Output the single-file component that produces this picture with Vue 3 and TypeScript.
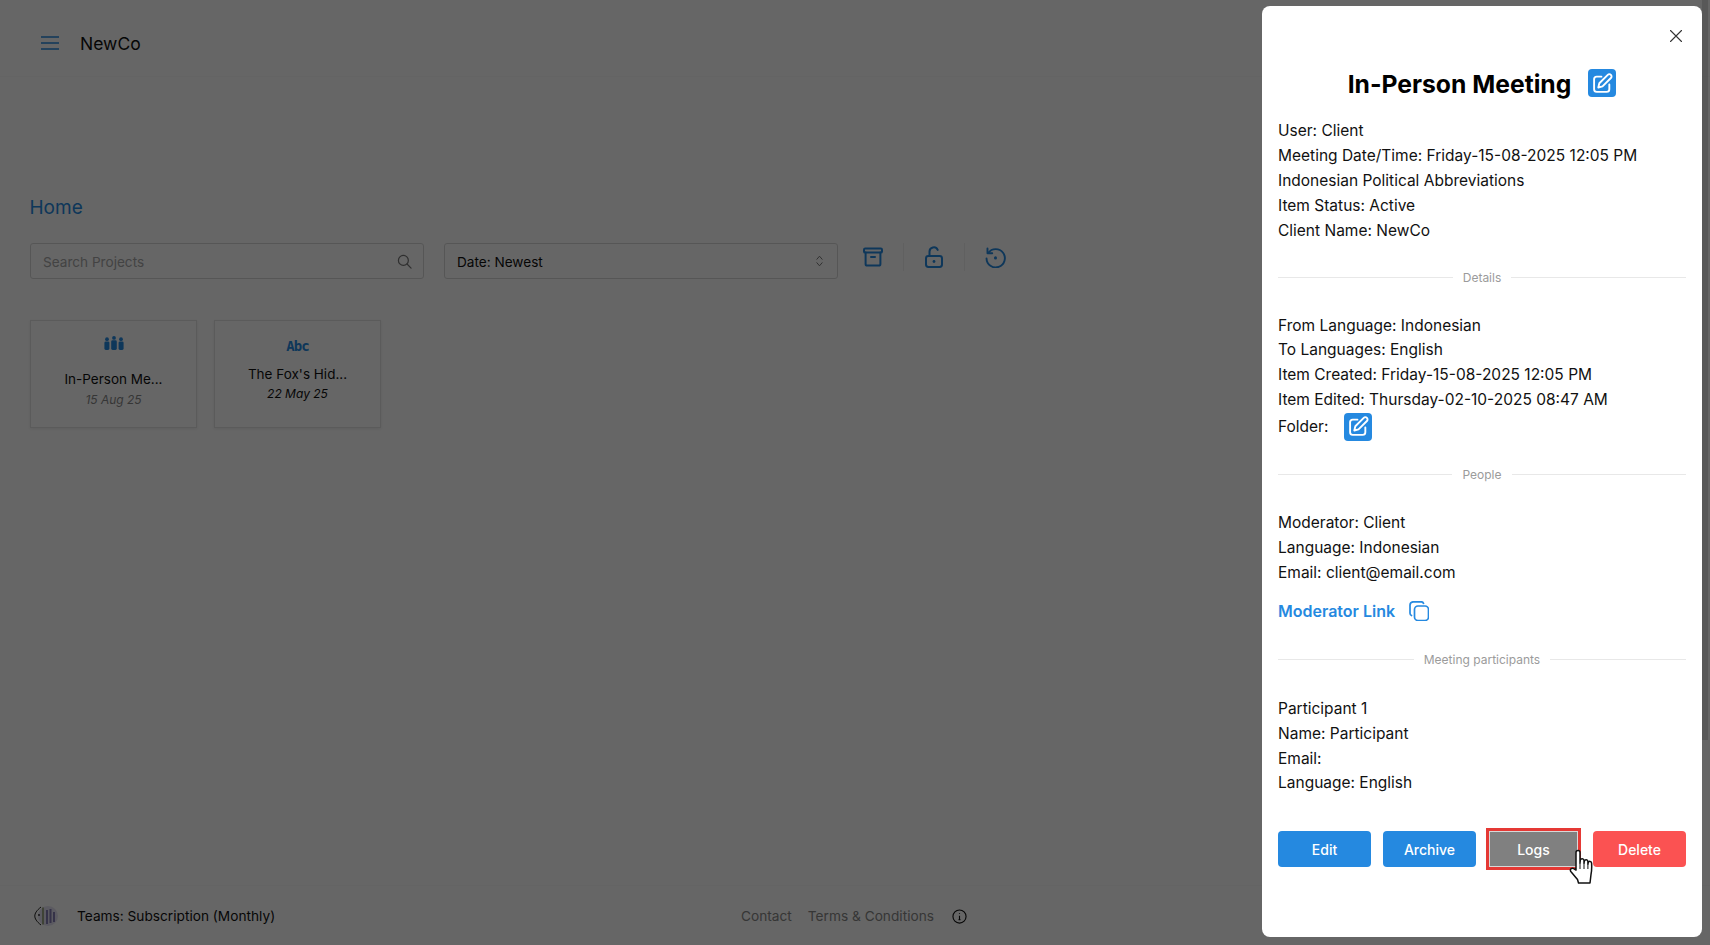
<script setup lang="ts">
interface Project {
  title: string
  date: string
  kind: 'meeting' | 'text'
}

const projects: Project[] = [
  { title: 'In-Person Me...', date: '15 Aug 25', kind: 'meeting' },
  { title: "The Fox's Hid...", date: '22 May 25', kind: 'text' },
]

const summary = [
  'User: Client',
  'Meeting Date/Time: Friday-15-08-2025 12:05 PM',
  'Indonesian Political Abbreviations',
  'Item Status: Active',
  'Client Name: NewCo',
]
const details = [
  'From Language: Indonesian',
  'To Languages: English',
  'Item Created: Friday-15-08-2025 12:05 PM',
  'Item Edited: Thursday-02-10-2025 08:47 AM',
]
const people = ['Moderator: Client', 'Language: Indonesian', 'Email: client@email.com']
const participants = ['Participant 1', 'Name: Participant', 'Email:', 'Language: English']
</script>

<template>
  <div class="page">
    <header class="topbar">
      <svg class="menu" viewBox="0 0 18 14" width="18" height="14" fill="none" stroke="#2589e0" stroke-width="1.6">
        <path d="M0 1h18M0 7h18M0 13h18" />
      </svg>
      <span class="brand">NewCo</span>
    </header>

    <main class="content">
      <h1 class="home">Home</h1>
      <div class="toolbar">
        <div class="field search">
          <span class="placeholder">Search Projects</span>
          <svg viewBox="0 0 16 16" width="15" height="15" fill="none" stroke="#777" stroke-width="1.3">
            <circle cx="6.8" cy="6.8" r="5.3" />
            <path d="M10.7 10.7L15 15" stroke-linecap="round" />
          </svg>
        </div>
        <div class="field select">
          <span class="value">Date: Newest</span>
          <svg viewBox="0 0 10 16" width="9" height="14" fill="none" stroke="#777" stroke-width="1.1">
            <path d="M2 6l3-3.5L8 6M2 10l3 3.5L8 10" stroke-linecap="round" stroke-linejoin="round" />
          </svg>
        </div>
        <div class="tools">
          <svg class="tool" viewBox="0 0 20 20" width="20" height="20" fill="none" stroke="#2589e0" stroke-width="2" stroke-linejoin="round">
            <rect x="1" y="1.6" width="18" height="4" rx="1.2" />
            <path d="M2.6 5.6V17a1.6 1.6 0 0 0 1.6 1.600h11.600a1.600 1.600 0 0 0 1.600-1.600V5.600M8 10h4" stroke-linecap="round" />
          </svg>
          <i class="sep"></i>
          <svg class="tool" viewBox="0 0 20 22" width="20" height="22" fill="none" stroke="#2589e0" stroke-width="2">
            <rect x="2" y="10" width="16" height="11" rx="2.400" />
            <path d="M5.500 10V5.800a4.300 4.300 0 0 1 8.200-1.900" stroke-linecap="round" />
            <circle cx="10" cy="15.500" r="1.400" fill="#2589e0" stroke="none" />
          </svg>
          <i class="sep"></i>
          <svg class="tool" viewBox="0 0 22 22" width="21" height="21" fill="none" stroke="#2589e0" stroke-width="2" stroke-linecap="round" stroke-linejoin="round">
            <path d="M3.400 6.200A9.600 9.600 0 1 1 1.600 12" />
            <path d="M2.600 1.600v5h5" />
            <circle cx="11" cy="11.400" r="1.600" fill="#2589e0" stroke="none" />
          </svg>
        </div>
      </div>

      <div class="cards">
        <article v-for="p in projects" :key="p.title" class="card" :class="p.kind">
          <svg v-if="p.kind === 'meeting'" class="people-icon" viewBox="0 0 20 14" width="20" height="14" fill="#2589e0">
            <circle cx="3" cy="3.200" r="1.900" />
            <rect x="0.400" y="5.400" width="5" height="8.600" rx="1.400" />
            <circle cx="10" cy="1.900" r="1.900" />
            <rect x="7.200" y="4.300" width="5.600" height="9.700" rx="1.400" />
            <circle cx="17" cy="3.200" r="1.900" />
            <rect x="14.600" y="5.400" width="5" height="8.600" rx="1.400" />
          </svg>
          <span v-else class="abc">Abc</span>
          <div class="card-title">{{ p.title }}</div>
          <div class="card-date">{{ p.date }}</div>
        </article>
      </div>
    </main>

    <footer class="footer">
      <div class="foot-left">
        <svg viewBox="0 0 25 22" width="25" height="22" fill="none">
          <ellipse cx="14" cy="11" rx="10" ry="10" fill="#d8d4ec" opacity=".7" />
          <path d="M7 2C2.500 5.500 .800 8.500.800 11s1.700 5.500 6.200 9" stroke="#222" stroke-width="1" />
          <path d="M9 2.500v17" stroke="#7f8f5a" stroke-width="1.400" />
          <path d="M13 5v14M16.500 4v14M20 7v10" stroke="#5d5299" stroke-width="2" opacity=".7" />
          <circle cx="5" cy="10" r=".9" fill="#222" />
        </svg>
        <span>Teams: Subscription (Monthly)</span>
      </div>
      <nav class="foot-links">
        <span>Contact</span>
        <span>Terms &amp; Conditions</span>
        <svg class="info" viewBox="0 0 16 16" width="15" height="15" fill="none" stroke="#111" stroke-width="1.200">
          <circle cx="8" cy="8" r="7" />
          <path d="M8 7.300v4M7 11.300h2M8 4.600v.6" />
        </svg>
      </nav>
    </footer>

    <div class="overlay"></div>
    <div class="scroll-thumb"></div>

    <aside class="drawer">
      <svg class="close" viewBox="0 0 12 12" width="12" height="12" fill="none" stroke="#333" stroke-width="1.100">
        <path d="M.5.500l11 11M11.500.500l-11 11" stroke-linecap="round" />
      </svg>

      <div class="title-row">
        <h2>In-Person Meeting</h2>
        <button class="edit-btn" type="button" aria-label="Edit title">
          <svg viewBox="0 0 20 20" width="21" height="21" fill="none" stroke="#fff" stroke-width="1.800" stroke-linecap="round" stroke-linejoin="round">
            <path d="M9 3.500H4.500a2.500 2.500 0 0 0-2.500 2.500v9.500a2.500 2.500 0 0 0 2.500 2.500H14a2.500 2.500 0 0 0 2.500-2.500V11" />
            <path d="M15 1.800a2.100 2.100 0 0 1 3 3l-8 8-4 1 1-4z" />
          </svg>
        </button>
      </div>

      <div class="block first">
        <div v-for="l in summary" :key="l" class="line">{{ l }}</div>
      </div>

      <div class="divider"><span>Details</span></div>

      <div class="block">
        <div v-for="l in details" :key="l" class="line">{{ l }}</div>
        <div class="folder">
          <span>Folder:</span>
          <button class="edit-btn" type="button" aria-label="Edit folder">
            <svg viewBox="0 0 20 20" width="21" height="21" fill="none" stroke="#fff" stroke-width="1.800" stroke-linecap="round" stroke-linejoin="round">
              <path d="M9 3.500H4.500a2.500 2.500 0 0 0-2.500 2.500v9.500a2.500 2.500 0 0 0 2.500 2.500H14a2.500 2.500 0 0 0 2.500-2.500V11" />
              <path d="M15 1.800a2.100 2.100 0 0 1 3 3l-8 8-4 1 1-4z" />
            </svg>
          </button>
        </div>
      </div>

      <div class="divider"><span>People</span></div>

      <div class="block">
        <div v-for="l in people" :key="l" class="line">{{ l }}</div>
        <div class="mod-link">
          <span>Moderator Link</span>
          <svg viewBox="0 0 20 20" width="20" height="20" fill="none" stroke="#2589e0" stroke-width="1.700" stroke-linejoin="round">
            <rect x="5.500" y="5" width="14" height="14.500" rx="3.500" />
            <path d="M2.500 14.500A2.500 2.500 0 0 1 1 12.200V4a3.500 3.500 0 0 1 3.500-3.200h7.800a2.500 2.500 0 0 1 2.200 1.500" stroke-linecap="round" />
          </svg>
        </div>
      </div>

      <div class="divider third"><span>Meeting participants</span></div>

      <div class="block">
        <div v-for="l in participants" :key="l" class="line">{{ l }}</div>
      </div>

      <div class="actions">
        <button class="btn blue" type="button">Edit</button>
        <button class="btn blue" type="button">Archive</button>
        <button class="btn gray" type="button">Logs</button>
        <button class="btn red" type="button">Delete</button>
      </div>

      <svg class="hand" viewBox="0 0 26 36" width="26" height="36" stroke="#111" stroke-width="1.500" fill="#fff" stroke-linejoin="round">
        <path d="M7 21V3.500a2 2 0 0 1 4 0V14l.3-3a1.900 1.900 0 0 1 3.700.300V14l.4-2a1.800 1.800 0 0 1 3.500.400V15l.4-1.500a1.700 1.700 0 0 1 3.300.500c.2 4 .2 8-.6 11.500L21 34H9.500l-1-3.500L1.800 22.500c-1.300-2 1-4.200 2.900-2.900z" />
        <path d="M11 14v6M15 14v6M18.900 15v5" fill="none" stroke-width="1" />
      </svg>
    </aside>
  </div>
</template>

<style>
html,
body {
  margin: 0;
  overflow: hidden;
  background: #fff;
}
</style>

<style scoped>
.page {
  height: 945px;
  display: flex;
  flex-direction: column;
  font-family: Inter, "Liberation Sans", sans-serif;
  color: #111;
  background: #fff;
}

.topbar {
  height: 77px;
  flex: none;
  display: flex;
  align-items: center;
  gap: 21px;
  padding-left: 41px;
  border-bottom: 1px solid #fbfbfb;
  box-sizing: border-box;
}

.menu {
  margin-top: 9px;
}

.brand {
  font-size: 17.5px;
  margin-top: 11px;
}

.content {
  flex: 1;
  padding: 0 30px;
}

.home {
  margin: 117px 0 0 -0.5px;
  font-size: 19px;
  font-weight: 400;
  line-height: 28px;
  color: #2589e0;
}

.toolbar {
  display: flex;
  align-items: flex-start;
  margin-top: 21px;
}

.field {
  height: 36px;
  box-sizing: border-box;
  border: 1px solid #d8d8d8;
  border-radius: 3px;
  display: flex;
  align-items: center;
  justify-content: space-between;
  font-size: 13.6px;
}

.search {
  width: 394px;
  padding: 0 11px 0 12px;
}

.placeholder {
  color: #a8a8a8;
  margin-top: 1px;
}

.value {
  margin-top: 1px;
}

.select {
  width: 394px;
  margin-left: 20px;
  padding: 0 13px 0 12px;
}

.tools {
  display: flex;
  align-items: center;
  height: 28px;
  margin-left: 25px;
}

.tool {
  flex: none;
}

.sep {
  width: 1px;
  height: 28px;
  background: #f0f0f0;
  margin: 0 20px;
}

.cards {
  display: flex;
  gap: 17px;
  margin-top: 41px;
}

.card {
  width: 167px;
  height: 108px;
  box-sizing: border-box;
  border: 1px solid #e4e4e4;
  box-shadow: 0 1px 3px rgba(0, 0, 0, 0.08);
  display: flex;
  flex-direction: column;
  align-items: center;
  text-align: center;
}

.people-icon {
  margin-top: 15px;
}

.abc {
  margin-top: 17px;
  font-family: "DejaVu Sans Mono", monospace;
  font-size: 14px;
  letter-spacing: -0.9px;
  line-height: 17px;
  font-weight: 700;
  color: #2589e0;
}

.card-title {
  font-size: 13.5px;
  line-height: 20px;
  margin-top: 9px;
}

.meeting .card-title {
  margin-top: 19px;
}

.card-date {
  font-size: 12px;
  font-style: italic;
  line-height: 16px;
  margin-top: 2px;
}

.meeting .card-date {
  color: #888;
  margin-top: 3px;
}

.footer {
  flex: none;
  height: 60px;
  box-sizing: border-box;
  border-top: 1px solid #fbfbfb;
  display: flex;
  align-items: center;
  padding: 1px 0 0 34px;
  font-size: 13.7px;
}

.foot-left {
  display: flex;
  align-items: center;
  gap: 18px;
  width: 707px;
}

.foot-links {
  display: flex;
  align-items: center;
  gap: 16px;
  color: #888;
}

.info {
  margin-left: 2px;
}

.overlay {
  position: fixed;
  inset: 0;
  background: rgba(0, 0, 0, 0.6);
}

.scroll-thumb {
  position: fixed;
  top: 0;
  right: 2px;
  width: 6px;
  height: 740px;
  background: rgba(0, 0, 0, 0.14);
}

.drawer {
  position: fixed;
  top: 6px;
  right: 8px;
  bottom: 8px;
  width: 440px;
  box-sizing: border-box;
  padding: 63px 16px 0;
  background: #fff;
  border-radius: 8px;
  font-size: 15.5px;
  color: #111;
}

.close {
  position: absolute;
  top: 24px;
  right: 20px;
}

.title-row {
  display: flex;
  justify-content: center;
  align-items: center;
  gap: 17px;
  height: 28px;
}

.title-row h2 {
  margin: 1px 0 0;
  font-size: 24.7px;
  font-weight: 700;
  color: #000;
}

.edit-btn {
  width: 28px;
  height: 28px;
  padding: 0;
  border: 0;
  border-radius: 4px;
  background: #2589e0;
  display: flex;
  align-items: center;
  justify-content: center;
}

.block.first {
  margin-top: 21px;
}

.line {
  line-height: 24.85px;
  height: 24.85px;
  white-space: nowrap;
}

.first .line {
  line-height: 25px;
  height: 25px;
}

.divider {
  display: flex;
  align-items: center;
  gap: 10px;
  height: 16px;
  margin: 26px 0 28.5px;
  font-size: 12px;
  color: #9b9b9b;
}

.divider::before,
.divider::after {
  content: "";
  flex: 1;
  height: 1px;
  background: #e8e8e8;
}

.divider.third {
  margin: 31px 0 29px;
}

.folder {
  display: flex;
  align-items: center;
  gap: 16px;
  height: 28px;
}

.mod-link {
  display: flex;
  align-items: center;
  gap: 14px;
  height: 20px;
  margin-top: 15px;
  font-size: 16px;
  font-weight: 600;
  color: #2589e0;
}

.actions {
  display: grid;
  grid-template-columns: repeat(4, 1fr);
  gap: 12px;
  margin-top: 35px;
}

.btn {
  height: 36px;
  border: 0;
  border-radius: 4px;
  font: 500 14px Inter, "Liberation Sans", sans-serif;
  color: #fff;
}

.blue {
  background: #2589e0;
}

.red {
  background: #fb5252;
}

.gray {
  height: 42px;
  margin: -3px 0 -3px -2px;
  background: #808080;
  border: 3px solid #e53935;
  border-radius: 0;
  box-shadow: inset 0 0 0 1px #d8d8d8;
}

.hand {
  position: absolute;
  left: 307px;
  top: 843px;
}
</style>
